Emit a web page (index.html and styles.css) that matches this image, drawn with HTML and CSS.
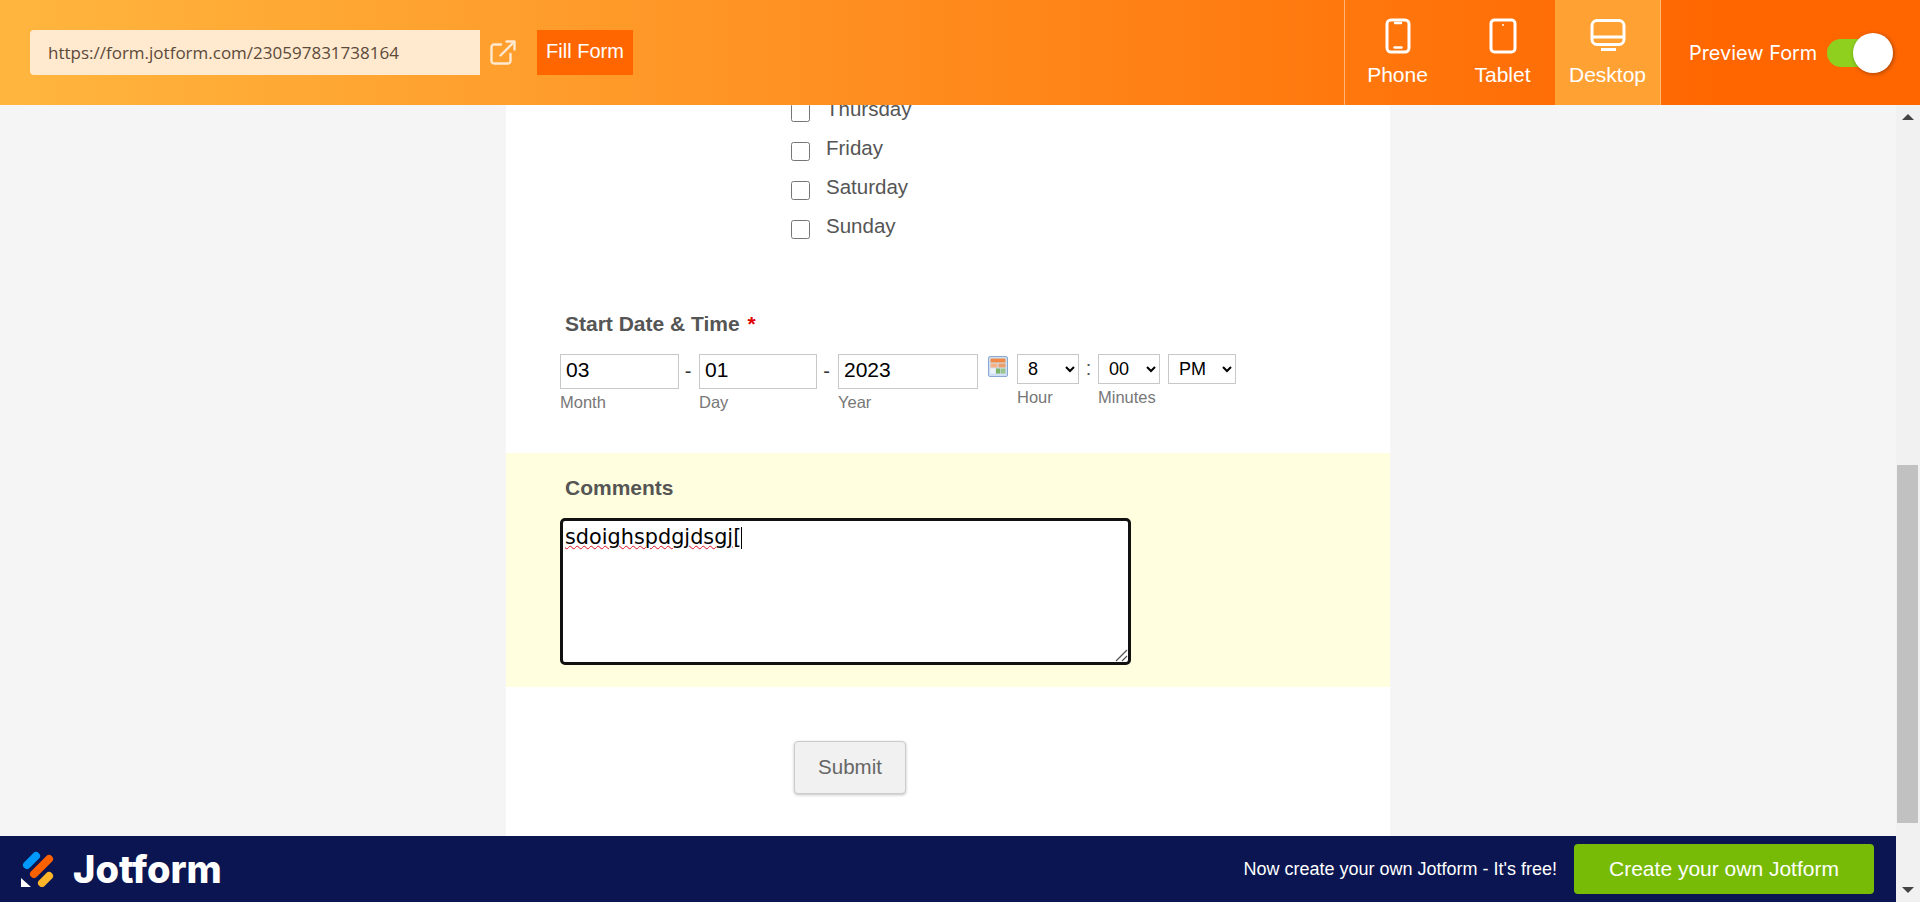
FILE: index.html
```html
<!DOCTYPE html>
<html lang="en">
<head>
  <meta charset="UTF-8">
  <meta name="viewport" content="width=device-width, initial-scale=1.0">
  <link rel="stylesheet" href="styles.css">
  <title>Jotform Preview</title>
</head>
<body>
  <header class="topbar">
    <div class="url-box">https://form.jotform.com/230597831738164</div>
    <a class="open-link" href="#">
      <svg width="26" height="26" viewBox="0 0 26 26" fill="none" stroke="#ffe9cf" stroke-width="2.4" stroke-linecap="round" stroke-linejoin="round">
        <path d="M11 4.500H4a2.500 2.500 0 0 0-2.500 2.500v14A2.500 2.500 0 0 0 4 23.500h14a2.500 2.500 0 0 0 2.500-2.500v-7"/>
        <path d="M10.500 15.500 24 2"/>
        <path d="M16.500 1.500H24.500V9.500"/>
      </svg>
    </a>
    <button class="fill-btn">Fill Form</button>

    <nav class="devices">
      <div class="device">
        <svg width="26" height="36" viewBox="0 0 26 36" fill="none" stroke="#fff" stroke-width="3" stroke-linecap="round">
          <rect x="2" y="2" width="22" height="32" rx="4"/>
          <path d="M10 5h6" stroke-width="2.400"/>
          <path d="M9.500 29.500h7" stroke-width="2.400"/>
        </svg>
        <span>Phone</span>
      </div>
      <div class="device">
        <svg width="28" height="36" viewBox="0 0 28 36" fill="none" stroke="#fff" stroke-width="3">
          <rect x="2" y="2" width="24" height="32" rx="3.500"/>
          <circle cx="14" cy="7" r="1" fill="#fff" stroke="none"/>
        </svg>
        <span>Tablet</span>
      </div>
      <div class="device active">
        <svg width="36" height="36" viewBox="0 0 36 36" fill="none" stroke="#fff" stroke-width="3">
          <rect x="2" y="2.500" width="32" height="24" rx="5"/>
          <path d="M2 19h32"/>
          <path d="M11 31.500h15" stroke-width="3"/>
        </svg>
        <span>Desktop</span>
      </div>
    </nav>

    <div class="preview-toggle">
      <span>Preview Form</span>
      <div class="toggle"><div class="knob"></div></div>
    </div>
  </header>

  <div class="preview">
    <div class="stage">
      <div class="canvas">
        <main class="form-card">
          <div class="options">
            <label class="option"><input type="checkbox"><span>Thursday</span></label>
            <label class="option"><input type="checkbox"><span>Friday</span></label>
            <label class="option"><input type="checkbox"><span>Saturday</span></label>
            <label class="option"><input type="checkbox"><span>Sunday</span></label>
          </div>

          <section class="date-section">
            <div class="field-label">Start Date &amp; Time <span class="req">*</span></div>
            <div class="date-row">
              <div class="part">
                <input class="date-input month" type="text" value="03">
                <span class="sub">Month</span>
              </div>
              <span class="dash dash-a">-</span>
              <div class="part">
                <input class="date-input day" type="text" value="01">
                <span class="sub">Day</span>
              </div>
              <span class="dash dash-b">-</span>
              <div class="part">
                <input class="date-input year" type="text" value="2023">
                <span class="sub">Year</span>
              </div>
              <svg class="cal" width="20" height="21" viewBox="0 0 20 21">
                <rect x="0.500" y="0.500" width="19" height="20" rx="1.500" fill="#cfe0f5" stroke="#8aa8d0"/>
                <rect x="2.500" y="2.500" width="15" height="4" fill="#f08a45"/>
                <rect x="2.500" y="7.500" width="7" height="4" fill="#f5b183"/>
                <rect x="10.500" y="7.500" width="7" height="4" fill="#e9a06d"/>
                <rect x="2.500" y="12.500" width="5" height="5" fill="#eef3fa"/>
                <rect x="8" y="12.500" width="4" height="5" fill="#7db46c"/>
                <rect x="12.500" y="12.500" width="5" height="5" fill="#9cc58e"/>
              </svg>
              <div class="part time">
                <select class="time-select hour"><option>8</option></select>
                <span class="sub">Hour</span>
              </div>
              <span class="colon">:</span>
              <div class="part time">
                <select class="time-select minutes"><option>00</option></select>
                <span class="sub">Minutes</span>
              </div>
              <div class="part time ampm-part">
                <select class="time-select ampm"><option>PM</option></select>
              </div>
            </div>
          </section>

          <section class="comments-section">
            <div class="field-label">Comments</div>
            <div class="comment-box">
              <span class="misspelt">sdoighspdgjdsgj</span>[<span class="caret"></span>
              <svg class="grip" width="14" height="14" viewBox="0 0 14 14" stroke="#555" stroke-width="1.200">
                <path d="M2 13 13 2"/>
                <path d="M8 13 13 8"/>
              </svg>
            </div>
          </section>

          <div class="submit-row">
            <button class="submit-btn">Submit</button>
          </div>
        </main>
      </div>

      <footer class="promo">
        <div class="logo">
          <svg width="34" height="36" viewBox="0 0 34 36" fill="none" stroke-width="8" stroke-linecap="round">
            <path d="M6 14 15 5" stroke="#0099ff"/>
            <path d="M13 23 28 8" stroke="#ff6100"/>
            <path d="M21 32 28 25" stroke="#ffb629"/>
            <path d="M0 27v9h10z" fill="#fff" stroke="none"/>
          </svg>
          <span class="wordmark">Jotform</span>
        </div>
        <span class="promo-text">Now create your own Jotform - It's free!</span>
        <a class="promo-btn" href="#">Create your own Jotform</a>
      </footer>
    </div>

    <div class="scrollbar">
      <div class="arrow up"></div>
      <div class="track"><div class="thumb"></div></div>
      <div class="arrow down"></div>
    </div>
  </div>
</body>
</html>
```

FILE: styles.css
```css
* {
  box-sizing: border-box;
}

body {
  margin: 0;
  height: 902px;
  overflow: hidden;
  display: flex;
  flex-direction: column;
  font-family: "Liberation Sans", Arial, sans-serif;
  background-color: #f5f5f5;
}

/* top bar */
.topbar {
  height: 105px;
  flex: none;
  display: flex;
  align-items: center;
  padding-left: 30px;
  background: linear-gradient(90deg, #ffb63f 0%, #ff6600 90%);
  position: relative;
  z-index: 2;
}

.url-box {
  width: 450px;
  height: 45px;
  padding-left: 18px;
  line-height: 45px;
  font-family: "Open Sans", sans-serif;
  font-size: 17px;
  color: #5b4a3a;
  background-color: #ffe9cf;
  border-radius: 4px 0 0 4px;
}

.open-link {
  display: flex;
  margin-left: 10px;
}

.fill-btn {
  width: 96px;
  height: 45px;
  margin-left: 21px;
  padding: 0 0 2px;
  border: none;
  font-family: "Liberation Sans", Arial, sans-serif;
  font-size: 20px;
  color: #fff;
  background-color: #ff6600;
}

.devices {
  margin-left: auto;
  height: 105px;
  display: flex;
  border-left: 1px solid rgba(255, 255, 255, 0.45);
}

.device {
  width: 105px;
  height: 105px;
  padding-top: 18px;
  display: flex;
  flex-direction: column;
  align-items: center;
  color: #fff;
  font-size: 21px;
}

.device span {
  margin-top: 9px;
  line-height: 24px;
}

.device.active {
  width: 106px;
  background-color: #ffa133;
  border-right: 1px solid rgba(255, 255, 255, 0.3);
}

.preview-toggle {
  width: 259px;
  padding-left: 28px;
  display: flex;
  align-items: center;
  color: #fff;
  font-family: "Inter", sans-serif;
  font-size: 19.900px;
}

.toggle {
  width: 54px;
  height: 28px;
  margin-left: 10px;
  border-radius: 14px;
  background-color: #8fd01f;
  position: relative;
}

.knob {
  width: 40px;
  height: 40px;
  border-radius: 50%;
  background-color: #fff;
  box-shadow: 1px 1px 4px rgba(0, 0, 0, 0.35);
  position: absolute;
  top: -6px;
  right: -12px;
}

/* page under the bar */
.preview {
  flex: 1;
  min-height: 0;
  display: flex;
}

.stage {
  flex: 1;
  min-width: 0;
  display: flex;
  flex-direction: column;
}

.canvas {
  flex: 1;
  min-height: 0;
  overflow: hidden;
}

.form-card {
  width: 884px;
  height: 760px;
  margin: 0 auto;
  background-color: #fff;
  color: #555;
}

.options {
  padding: 0 0 0 285px;
  margin-top: -12px;
}

.option {
  height: 39px;
  display: flex;
  align-items: center;
  font-size: 20.500px;
}

.option input {
  width: 19px;
  height: 19px;
  margin: 0 16px 0 0;
}

.option span {
  margin-bottom: 7px;
}

.date-section {
  padding: 63px 0 0 54px;
}

.field-label {
  padding-left: 5px;
  line-height: 24px;
  font-size: 21px;
  font-weight: bold;
}

.req {
  margin-left: 2px;
  color: #e00000;
}

.date-row {
  margin-top: 18px;
  display: flex;
  align-items: flex-start;
}

.part {
  display: flex;
  flex-direction: column;
}

.date-input {
  height: 35px;
  padding: 0 5px 4px;
  border: 1px solid #c8c8c8;
  font-family: "Liberation Sans", Arial, sans-serif;
  font-size: 21px;
  color: #000;
}

.month {
  width: 119px;
}

.day {
  width: 118px;
}

.year {
  width: 140px;
}

.sub {
  font-size: 16.500px;
  line-height: 20px;
  margin-top: 3px;
  color: #777;
}

.dash {
  padding-right: 2px;
  text-align: center;
  font-size: 20px;
  line-height: 35px;
  color: #333;
}

.dash-a {
  width: 20px;
}

.dash-b {
  width: 21px;
}

.cal {
  margin: 2px 9px 0 10px;
}

.time-select {
  height: 30px;
  border: 1px solid #c8c8c8;
  border-radius: 0;
  font-family: "Liberation Sans", Arial, sans-serif;
  font-size: 18px;
  color: #000;
  background-color: #fff;
  padding-left: 6px;
}

.hour,
.minutes {
  width: 62px;
}

.ampm {
  width: 68px;
}

.colon {
  width: 19px;
  text-align: center;
  font-size: 20px;
  line-height: 28px;
  color: #555;
}

.ampm-part {
  margin-left: 8px;
}

.comments-section {
  height: 234px;
  margin-top: 41px;
  padding: 23px 0 0 54px;
  background-color: #ffffdf;
}

.comment-box {
  width: 571px;
  height: 147px;
  margin-top: 18px;
  padding: 3px 2px;
  border: 3px solid #111;
  border-radius: 5px;
  background-color: #fff;
  color: #000;
  font-family: "DejaVu Sans", sans-serif;
  font-size: 20.800px;
  line-height: 26px;
  position: relative;
}

.misspelt {
  text-decoration: underline wavy #e0101e 1px;
}

.caret {
  display: inline-block;
  width: 1px;
  height: 22px;
  vertical-align: -5px;
  background-color: #000;
}

.grip {
  position: absolute;
  right: 0;
  bottom: 0;
}

.submit-row {
  padding: 54px 0 0 288px;
}

.submit-btn {
  width: 112px;
  height: 53px;
  padding: 0 0 2px;
  border: 1px solid #ccc;
  border-radius: 4px;
  font-family: "Liberation Sans", Arial, sans-serif;
  font-size: 20.500px;
  color: #666;
  background-color: #f1f1f1;
  box-shadow: 0 1px 3px rgba(0, 0, 0, 0.25);
}

/* bottom promo */
.promo {
  height: 66px;
  flex: none;
  display: flex;
  align-items: center;
  padding: 0 22px 0 21px;
  background-color: #0a1551;
  color: #fff;
}

.logo {
  display: flex;
  align-items: center;
}

.wordmark {
  margin-left: 18px;
  font-family: "Inter", sans-serif;
  font-size: 38px;
  font-weight: 800;
}

.promo-text {
  margin-left: auto;
  font-size: 18px;
}

.promo-btn {
  width: 300px;
  height: 50px;
  margin-left: 17px;
  display: flex;
  align-items: center;
  justify-content: center;
  border-radius: 4px;
  background-color: #78bb07;
  color: #fff;
  font-size: 21px;
  text-decoration: none;
}

/* scrollbar */
.scrollbar {
  width: 24px;
  flex: none;
  display: flex;
  flex-direction: column;
  background-color: #f1f1f1;
}

.arrow {
  height: 24px;
  flex: none;
  display: flex;
  align-items: center;
  justify-content: center;
}

.arrow::before {
  content: "";
  border-left: 6px solid transparent;
  border-right: 6px solid transparent;
}

.arrow.up::before {
  border-bottom: 6px solid #444;
}

.arrow.down::before {
  border-top: 6px solid #444;
}

.track {
  flex: 1;
  padding-top: 336px;
}

.thumb {
  width: 21px;
  height: 358px;
  margin-left: 1px;
  background-color: #c1c1c1;
}
```
